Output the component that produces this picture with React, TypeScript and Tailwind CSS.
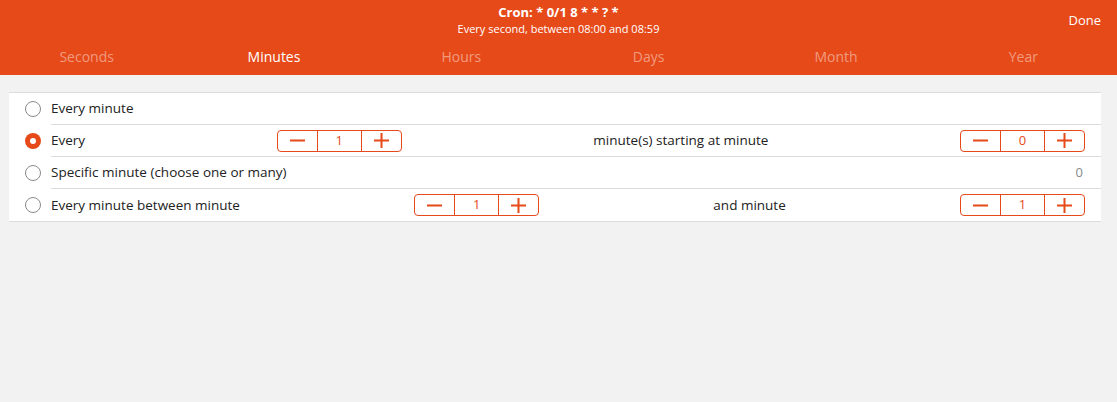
const tabs = ["Seconds", "Minutes", "Hours", "Days", "Month", "Year"];

function Radio({ checked }: { checked?: boolean }) {
  if (checked) {
    return (
      <span className="flex h-4 w-4 shrink-0 items-center justify-center rounded-full bg-[#e64a19]">
        <span className="h-[6px] w-[6px] rounded-full bg-white" />
      </span>
    );
  }
  return <span className="h-4 w-4 shrink-0 rounded-full border border-[#8a8a8a] bg-white" />;
}

function Stepper({ value }: { value: number }) {
  return (
    <div className="flex h-[22px] w-[125px] shrink-0 items-stretch rounded-[4px] border border-[#e64a19] text-[#e64a19]">
      <button className="flex w-[39px] items-center justify-center">
        <svg width="15" height="15" viewBox="0 0 15 15">
          <rect x="0" y="6.5" width="15" height="2" fill="currentColor" />
        </svg>
      </button>
      <div className="flex flex-1 items-center justify-center border-x border-[#e64a19] text-[13px]">
        {value}
      </div>
      <button className="flex w-[39px] items-center justify-center">
        <svg width="15" height="15" viewBox="0 0 15 15">
          <rect x="0" y="6.5" width="15" height="2" fill="currentColor" />
          <rect x="6.5" y="0" width="2" height="15" fill="currentColor" />
        </svg>
      </button>
    </div>
  );
}

function Row({ checked, last, children }: { checked?: boolean; last?: boolean; children: React.ReactNode }) {
  return (
    <div className="flex h-8 items-stretch">
      <div className="flex w-[42px] shrink-0 items-center pl-4">
        <Radio checked={checked} />
      </div>
      <div
        className={
          "flex flex-1 items-center pr-4 " + (last ? "" : "border-b border-[#dcdcdc]")
        }
      >
        {children}
      </div>
    </div>
  );
}

export default function App() {
  return (
    <div className="min-h-[402px] bg-[#f2f2f2] font-['Open_Sans',sans-serif] text-[#222]">
      <header className="overflow-hidden bg-[#e64a19] text-white">
        <div className="relative flex h-[39px] flex-col items-center pt-[3px]">
          <div className="text-[13px] font-bold leading-[18px]">Cron: * 0/1 8 * * ? *</div>
          <div className="text-[11px] leading-[15px]">Every second, between 08:00 and 08:59</div>
          <button className="absolute right-[16px] top-[11px] text-[13px]">Done</button>
        </div>
        <nav className="-ml-[7px] grid h-[36px] w-[1124px] grid-cols-6 items-center pb-[1px] text-[14px]">
          {tabs.map((t) => (
            <div key={t} className={"text-center " + (t === "Minutes" ? "text-white" : "text-white/45")}>
              {t}
            </div>
          ))}
        </nav>
      </header>

      <section className="mx-[9px] mt-[17px] w-[1092px] border-y border-[#dcdcdc] bg-white text-[13.5px]">
        <Row>
          <span>Every minute</span>
        </Row>
        <Row checked>
          <span className="flex-[1_1_auto]">Every</span>
          <Stepper value={1} />
          <span className="flex-[2_1_auto] text-center">minute(s) starting at minute</span>
          <Stepper value={0} />
        </Row>
        <Row>
          <span className="flex-1">Specific minute (choose one or many)</span>
          <span className="pr-[2px] text-[13px] text-[#8a8a8a]">0</span>
        </Row>
        <Row last>
          <span className="flex-[1_1_auto]">Every minute between minute</span>
          <Stepper value={1} />
          <span className="flex-[2_1_auto] text-center">and minute</span>
          <Stepper value={1} />
        </Row>
      </section>
    </div>
  );
}
